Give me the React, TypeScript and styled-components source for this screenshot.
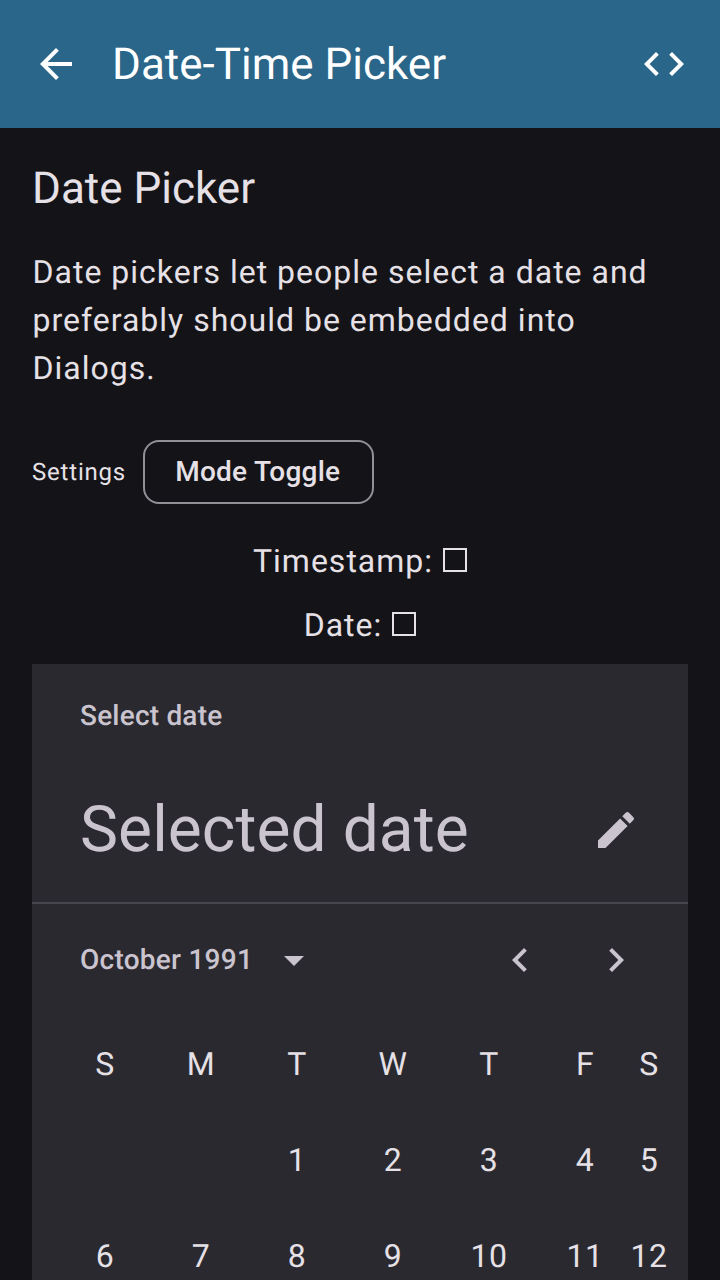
import React from "react";
import styled, { createGlobalStyle } from "styled-components";

const GlobalStyle = createGlobalStyle`
  * { box-sizing: border-box; }
  html, body { margin: 0; height: 1280px; overflow: hidden; background: #141318; }
  body { font-family: Roboto, sans-serif; color: #e6e1e6; text-rendering: geometricPrecision; }
`;
const Screen = styled.div`
  width: 720px; height: 1280px; overflow: hidden; background: #141318;
  display: flex; flex-direction: column;
`;
const AppBar = styled.header`
  flex: none; height: 128px; padding: 0 32px; background: #2a6689; color: #fff;
  display: flex; align-items: center;
`;
const AppTitle = styled.h1`
  margin: 0 0 0 32px; flex: 1; font-size: 44px; font-weight: 400; line-height: 56px; white-space: nowrap;
`;
const Icon = styled.svg`
  display: block; flex: none; fill: currentColor; width: 48px; height: 48px;
`;
const Content = styled.main`
  flex: none; padding: 32px 32px 0; display: flex; flex-direction: column;
`;
const Heading = styled.h2`
  margin: 0; font-size: 44px; font-weight: 400; line-height: 56px;
`;
const Description = styled.p`
  margin: 32px 0 0; padding-left: 0.5px; font-size: 32px; line-height: 48px; letter-spacing: 1px;
`;
const SettingsRow = styled.div`
  margin-top: 48px; display: flex; align-items: center; gap: 17px;
`;
const SettingsLabel = styled.span`
  font-size: 24px; letter-spacing: 0.8px; width: 94px; white-space: nowrap;
`;
const OutlinedButton = styled.button`
  width: 231px; height: 64px; padding: 0 1.5px 0 0; border: 2px solid #938f96; border-radius: 16px;
  background: transparent; color: #e6e1e6; font: 500 28px/40px Roboto, sans-serif; letter-spacing: 0.25px;
`;
const Values = styled.div`
  padding: 25px 0 7px;
`;
const ValueLine = styled.p`
  margin: 0; height: 64px; display: flex; align-items: center; justify-content: center; gap: 10px;
  font-size: 32px; letter-spacing: 1px;
`;
const EmptyBox = styled.span`
  width: 24px; height: 24px; margin-bottom: 2px; border: 2px solid #e6e1e6;
`;
const Picker = styled.section`
  height: 640px; background: #2b2930; color: #cac4cf; overflow: hidden;
`;
const PickerHeader = styled.div`
  height: 240px; padding: 32px 48px 0; border-bottom: 2px solid #49454f;
`;
const PickerLabel = styled.div`
  font-size: 28px; font-weight: 500; line-height: 40px; letter-spacing: 0.2px;
`;
const SelectedRow = styled.div`
  margin-top: 54px; display: flex; align-items: center; justify-content: space-between;
  font-size: 64px; line-height: 80px; letter-spacing: 0.1px;
`;
const MonthBar = styled.div`
  height: 112px; padding: 0 48px; display: flex; align-items: center;
`;
const MonthLabel = styled.span`
  width: 190px; padding-bottom: 2px; font-size: 28px; font-weight: 500; letter-spacing: 0.25px; white-space: nowrap;
`;
const Arrows = styled.div`
  margin-left: auto; display: flex; gap: 48px;
`;
const Calendar = styled.div`
  padding-left: 24px; display: grid; grid-template-columns: repeat(6, 96px) 32px; grid-auto-rows: 96px;
`;
const Day = styled.span`
  display: flex; align-items: center; justify-content: center;
  padding-left: 2px; font-size: 32px; letter-spacing: 0.5px; color: #e6e1e6;
`;

const days = ["S", "M", "T", "W", "T", "F", "S", "", "", "1", "2", "3", "4", "5", "6", "7", "8", "9", "10", "11", "12"];

export default function App() {
  return (
    <Screen>
      <GlobalStyle />
      <AppBar>
        <Icon viewBox="0 0 24 24"><path d="M20 11H7.83l5.59-5.59L12 4l-8 8 8 8 1.41-1.41L7.83 13H20v-2z" /></Icon>
        <AppTitle>Date-Time Picker</AppTitle>
        <Icon viewBox="0 0 24 24"><path d="M9.4 16.6 4.8 12l4.6-4.6L8 6l-6 6 6 6 1.4-1.4zm5.2 0 4.6-4.6-4.6-4.6L16 6l6 6-6 6-1.4-1.4z" /></Icon>
      </AppBar>
      <Content>
        <Heading>Date Picker</Heading>
        <Description>Date pickers let people select a date and preferably should be embedded into Dialogs.</Description>
        <SettingsRow>
          <SettingsLabel>Settings</SettingsLabel>
          <OutlinedButton>Mode Toggle</OutlinedButton>
        </SettingsRow>
        <Values>
          <ValueLine>Timestamp: <EmptyBox /></ValueLine>
          <ValueLine>Date: <EmptyBox /></ValueLine>
        </Values>
        <Picker>
          <PickerHeader>
            <PickerLabel>Select date</PickerLabel>
            <SelectedRow>
              Selected date
              <Icon viewBox="0 0 24 24"><path d="M3 17.25V21h3.75L17.81 9.94l-3.75-3.75L3 17.25zM20.71 7.04a1 1 0 0 0 0-1.41l-2.34-2.34a1 1 0 0 0-1.41 0l-1.83 1.83 3.75 3.75 1.83-1.83z" /></Icon>
            </SelectedRow>
          </PickerHeader>
          <MonthBar>
            <MonthLabel>October 1991</MonthLabel>
            <Icon viewBox="0 0 24 24"><path d="M7 10l5 5 5-5z" /></Icon>
            <Arrows>
              <Icon viewBox="0 0 24 24"><path d="M15.41 7.41 14 6l-6 6 6 6 1.41-1.41L10.83 12z" /></Icon>
              <Icon viewBox="0 0 24 24"><path d="M10 6 8.59 7.41 13.17 12l-4.58 4.59L10 18l6-6z" /></Icon>
            </Arrows>
          </MonthBar>
          <Calendar>{days.map((d, i) => <Day key={i}>{d}</Day>)}</Calendar>
        </Picker>
      </Content>
    </Screen>
  );
}
